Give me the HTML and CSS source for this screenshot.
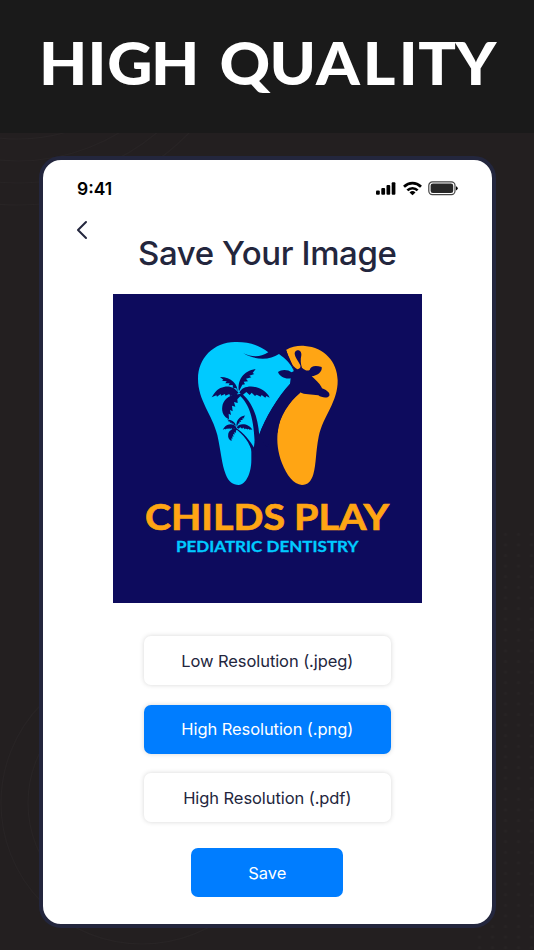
FILE: index.html
```html
<!DOCTYPE html>
<html lang="en">
<head>
<meta charset="utf-8">
<title>Save Your Image</title>
<link rel="stylesheet" href="styles.css">
</head>
<body>
<header class="banner">
  <svg class="headline" viewBox="0 0 534 133" role="heading" aria-label="HIGH QUALITY">
    <text transform="translate(0 84.5) scale(1.06 1)" x="36.7 82.5 101.2 142.5 207 254.2 298.2 342.3 376.3 394.5 429.5">HIGHQUALITY</text>
  </svg>
</header>
<main class="stage">
  <svg class="pattern" viewBox="0 133 534 817" aria-hidden="true">
    <defs><pattern id="dots" x="499.5" y="529" width="13" height="10.6" patternUnits="userSpaceOnUse"><circle cx="6" cy="5.3" r="1.5" fill="#272324"/></pattern></defs>
    <g fill="none" stroke="#282425" stroke-width="1.2">
      <circle cx="18" cy="-34" r="173"/><circle cx="18" cy="-34" r="195"/><circle cx="18" cy="-34" r="217"/><circle cx="18" cy="-34" r="239"/>
      <circle cx="142" cy="803" r="141"/><circle cx="142" cy="803" r="114"/>
    </g>
    <rect x="473" y="529" width="61" height="421" fill="url(#dots)"/>
  </svg>
  <section class="phone">
    <div class="status">
      <span class="time">9:41</span>
      <svg class="indicators" viewBox="0 0 82 16" aria-hidden="true">
        <rect x="0" y="9.5" width="3.8" height="4.2" rx="1"/><rect x="5.3" y="7" width="3.8" height="6.7" rx="1"/><rect x="10.5" y="4" width="3.7" height="9.7" rx="1"/><rect x="15.7" y="1.2" width="3.7" height="12.5" rx="1"/>
        <g fill="none" stroke="#000" stroke-width="2.7"><path d="M28 5.7C33 .8 40 .8 45 5.7M31.4 9.4C34.2 6.5 38.8 6.5 41.6 9.4"/></g>
        <path d="M33.5 11.4Q36.5 8.8 39.5 11.4L36.5 14.3Z"/>
        <rect x="52.8" y=".9" width="26.2" height="12.8" rx="3.6" fill="#fff" stroke="#444" stroke-width="1.2"/>
        <rect x="54.6" y="2.5" width="22.6" height="9.6" rx="2.3" fill="#282828"/>
        <path d="M80 5.3Q81.7 5.8 81.7 7.3T80 9.4Z"/>
      </svg>
    </div>
    <svg class="back" viewBox="0 0 12 20" aria-label="Back"><path d="M10 2L2 10l8 8"/></svg>
    <h1 class="title">Save Your Image</h1>
    <svg class="preview" viewBox="0 0 309 309" aria-label="Childs Play Pediatric Dentistry logo">
      <rect width="309" height="309" fill="#0d0b5d"/>
      <g transform="translate(77 41) scale(.33333)">
        <path fill="#00caff" d="M235 52C205 29 174 20 135 21C70 22 24 70 24 131C24 197 67 238 82 300C93 350 95 387 107 418C116 441 129 450 146 450C170 448 184 411 184 376L184 340L190 350L194 318L207 300C225 250 263 186 303 145L312 109C303 87 288 72 267 57C238 76 200 77 160 55C185 66 209 69 235 52Z"/>
        <path fill="#ffa514" d="M288 45C305 34 328 31 345 33C402 37 442 80 443 136C444 202 400 241 386 305C377 350 379 385 370 418C364 439 353 450 336 450C310 449 290 420 276 385C263 352 260 320 263 292C267 244 293 204 331 173L312 109C309 87 296 67 288 45Z"/>
        <path fill="#0d0b5d" d="M207 302C225 250 263 186 300 146L302 130C286 133 269 125 264 111C274 102 295 103 305 112L312 108C306 88 298 75 286 61L289 44C295 68 304 92 322 103C329 102 333 99 331 91C326 79 310 61 315 51C321 41 336 46 334 61C331 73 332 88 336 98C344 105 351 109 359 105C362 92 377 91 395 96C398 112 380 122 365 124C382 139 391 148 396 160C411 166 421 174 418 182C413 191 394 188 385 181C365 178 343 180 330 172C299 202 268 242 263 292L230 336Z"/>
        <g fill="#0d0b5d">
          <path d="M143 177C173 199 191 240 194 320L208 302C203 242 187 204 157 177ZM134 280C162 300 179 323 187 354L196 365L196 344C181 317 161 293 137 278Z"/>
          <g id="palm">
            <path d="M139 176C115 182 99 196 97 214C94 232 102 247 117 253L116 236L123 240L120 225L128 229L126 212L136 215L132 201L143 204L142 193L152 182Z"/>
            <path d="M146 174C132 153 112 150 91 159C77 166 71 178 65 187L79 181L81 185L92 177L93 182L105 177L106 182L118 177L120 183L135 179Z"/>
            <path d="M143 171C144 149 125 126 90 126L100 134L96 137L110 139L106 145L119 145L116 151L128 150L129 158L139 160Z"/>
            <path d="M147 169C141 137 160 107 197 102L188 114L193 117L178 122L184 127L168 131L174 139L161 140L165 148L157 149Z"/>
            <path d="M148 173C160 144 222 150 239 188L229 183L226 188L215 180L212 185L200 179L195 183L185 173L179 180L169 171L157 181Z"/>
          </g>
          <use href="#palm" transform="translate(60 180) scale(.51) translate(10 18)"/>
        </g>
      </g>
      <g class="brand">
        <text x="32" y="236" font-size="36.5" textLength="140" lengthAdjust="spacingAndGlyphs">CHILDS</text>
        <text x="181" y="236" font-size="36.5" textLength="95" lengthAdjust="spacingAndGlyphs">PLAY</text>
      </g>
      <text class="tagline" x="63" y="258" textLength="182.5" lengthAdjust="spacingAndGlyphs">PEDIATRIC DENTISTRY</text>
    </svg>
    <div class="options">
      <button class="option">Low Resolution (.jpeg)</button>
      <button class="option selected">High Resolution (.png)</button>
      <button class="option">High Resolution (.pdf)</button>
    </div>
    <button class="save">Save</button>
  </section>
</main>
</body>
</html>
```

FILE: styles.css
```css
* { box-sizing: border-box; }
body { margin: 0; width: 534px; height: 950px; overflow: hidden; background: #231f20; font-family: Inter, "Liberation Sans", sans-serif; }
.banner { height: 133px; background: #1a1a1a; }
.headline { display: block; width: 534px; height: 133px; fill: #fff; font: 900 59px Lato, sans-serif; }
.stage { position: relative; height: 817px; padding: 22.5px 0 0 39px; }
.pattern { position: absolute; left: 0; top: 0; width: 534px; height: 817px; }
.phone { position: relative; width: 456.5px; height: 772px; border: 4px solid #23263d; border-radius: 22px; background: #fff; display: flex; flex-direction: column; align-items: center; }
.status { width: 100%; height: 57.5px; padding: 18.5px 33.5px 0 34px; display: flex; justify-content: space-between; align-items: flex-start; }
.time { font-size: 17.5px; font-weight: 600; line-height: 22px; color: #000; }
.indicators { width: 82px; height: 16px; margin-top: 3px; }
.back { width: 12px; height: 20px; align-self: flex-start; margin: 3px 0 0 33px; fill: none; stroke: #23263d; stroke-width: 2; stroke-linecap: round; stroke-linejoin: round; }
.title { margin: -7px 0 0; font-size: 33px; line-height: 40px; font-weight: 500; letter-spacing: -.4px; color: #23263d; white-space: nowrap; }
.preview { width: 309px; height: 309px; margin-top: 21.2px; flex: none; }
.brand { fill: #ffa514; stroke: #ffa514; stroke-width: .7; font-family: Lato, sans-serif; font-weight: 700; }
.tagline { fill: #00caff; stroke: #00caff; stroke-width: .3; font: 700 15.8px Lato, sans-serif; }
.options { display: flex; flex-direction: column; gap: 19.5px; margin-top: 33.3px; }
button { border: 0; padding: 0; font: 400 16.5px Inter, sans-serif; letter-spacing: -.08px; height: 49px; border-radius: 7px; }
.option { width: 247px; background: #fff; color: #23263d; box-shadow: 0 0 5px rgba(0, 0, 0, .16); }
.selected, .save { background: #007dff; color: #fff; }
.save { width: 152px; margin-top: 26px; }
```
